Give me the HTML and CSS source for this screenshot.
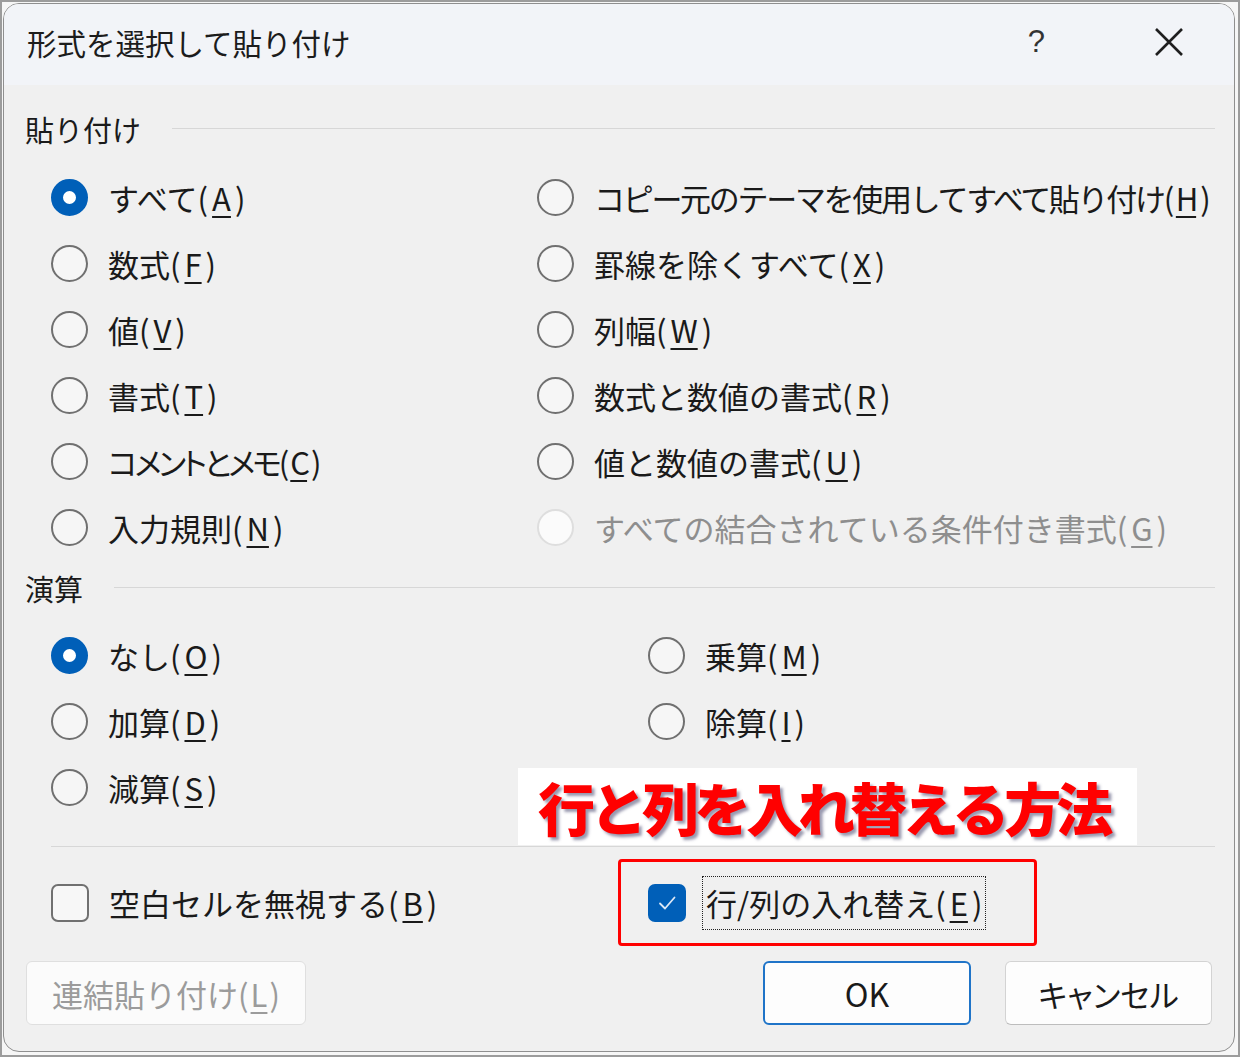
FILE: index.html
```html
<!DOCTYPE html>
<html lang="ja">
<head>
    <meta charset="UTF-8">
    <title>形式を選択して貼り付け</title>
    <link rel="stylesheet" href="styles.css">
</head>
<body>
<div class="frame">
    <div class="dialog">
        <div class="titlebar">
            <span class="title">形式を選択して貼り付け</span>
            <span class="help">?</span>
            <svg class="close" width="30" height="30" viewBox="0 0 30 30">
                <path d="M2 2L28 28M28 2L2 28" stroke="#1f1f1f" stroke-width="2.6" fill="none"/>
            </svg>
        </div>

        <div class="content">
            <div class="group-head"><span>貼り付け</span><span class="rule"></span></div>
            <div class="options paste">
                <div class="opt"><span class="radio checked"></span><span>すべて(<u>A</u>)</span></div>
                <div class="opt"><span class="radio"></span><span class="tight">コピー元のテーマを使用してすべて貼り付け(<u>H</u>)</span></div>
                <div class="opt"><span class="radio"></span><span>数式(<u>F</u>)</span></div>
                <div class="opt"><span class="radio"></span><span>罫線を除くすべて(<u>X</u>)</span></div>
                <div class="opt"><span class="radio"></span><span>値(<u>V</u>)</span></div>
                <div class="opt"><span class="radio"></span><span>列幅(<u>W</u>)</span></div>
                <div class="opt"><span class="radio"></span><span>書式(<u>T</u>)</span></div>
                <div class="opt"><span class="radio"></span><span>数式と数値の書式(<u>R</u>)</span></div>
                <div class="opt"><span class="radio"></span><span class="kata">コメントとメモ(<u>C</u>)</span></div>
                <div class="opt"><span class="radio"></span><span>値と数値の書式(<u>U</u>)</span></div>
                <div class="opt"><span class="radio"></span><span>入力規則(<u>N</u>)</span></div>
                <div class="opt disabled"><span class="radio"></span><span>すべての結合されている条件付き書式(<u>G</u>)</span></div>
            </div>

            <div class="group-head second"><span>演算</span><span class="rule"></span></div>
            <div class="options ops">
                <div class="opt"><span class="radio checked"></span><span>なし(<u>O</u>)</span></div>
                <div class="opt"><span class="radio"></span><span>乗算(<u>M</u>)</span></div>
                <div class="opt"><span class="radio"></span><span>加算(<u>D</u>)</span></div>
                <div class="opt"><span class="radio"></span><span>除算(<u>I</u>)</span></div>
                <div class="opt"><span class="radio"></span><span>減算(<u>S</u>)</span></div>
            </div>

            <div class="divider"></div>

            <div class="checks">
                <div class="opt skip"><span class="checkbox"></span><span>空白セルを無視する(<u>B</u>)</span></div>
                <div class="highlight">
                    <span class="checkbox checked">
                        <svg width="38" height="38" viewBox="0 0 38 38">
                            <path d="M12 19.5L17 24.5L26.5 13.5" stroke="#dce8f6" stroke-width="1.8" fill="none" stroke-linecap="round" stroke-linejoin="round"/>
                        </svg>
                    </span>
                    <span class="focus">行/列の入れ替え(<u>E</u>)</span>
                </div>
            </div>

            <div class="buttons">
                <button class="btn link" disabled>連結貼り付け(<u>L</u>)</button>
                <button class="btn ok">OK</button>
                <button class="btn cancel">キャンセル</button>
            </div>
        </div>

        <div class="note">行と列を入れ替える方法</div>
    </div>
</div>
</body>
</html>
```

FILE: styles.css
```css
body {
    margin: 0;
    background: #fff;
    font-family: "Noto Sans CJK JP", "Noto Sans", sans-serif;
    color: #1a1a1a;
}

.frame {
    width: 1240px;
    height: 1057px;
    box-sizing: border-box;
    border: 2px solid #9c9c9c;
    padding: 1px 3px 3px 1px;
    background: #f6f6f6;
}

.dialog {
    position: relative;
    width: 1232px;
    height: 1049px;
    box-sizing: border-box;
    border: 1px solid #8f8f8f;
    border-radius: 16px;
    overflow: hidden;
    background: #f0f0f0;
}

.titlebar {
    display: flex;
    align-items: center;
    height: 81px;
    box-sizing: border-box;
    padding: 0 50px 5px 23px;
    background: #f2f4f8;
}

.title {
    flex: 1;
    font-size: 29.5px;
    color: #1c1c1c;
}

.help {
    font-family: "Liberation Sans", sans-serif;
    font-size: 31px;
    color: #333;
    margin-right: 109px;
}

.close {
    display: block;
}

.content {
    padding: 0 19px 0 21px;
}

.group-head {
    display: flex;
    align-items: center;
    gap: 31px;
    height: 40px;
    margin-top: 24px;
    font-size: 29px;
}

.group-head.second {
    margin-top: 8px;
}

.rule {
    flex: 1;
    height: 1px;
    background: #d7d7d7;
    margin-top: -2px;
}

.options {
    display: grid;
    grid-auto-rows: 66px;
    padding-left: 26px;
}

.paste {
    margin-top: 15px;
    grid-template-columns: 486px 1fr;
}

.ops {
    margin-top: 14px;
    grid-template-columns: 597px 1fr;
}

.opt {
    display: flex;
    align-items: center;
    gap: 20px;
    font-size: 31px;
    white-space: nowrap;
}

.tight {
    letter-spacing: -2.3px;
}

.kata {
    font-feature-settings: "palt";
    letter-spacing: -3px;
}

u {
    margin: 0 4px;
    text-decoration-thickness: 2px;
    text-underline-offset: 5px;
}

.opt.disabled {
    color: #8e8e8e;
}

.radio {
    flex: none;
    width: 37px;
    height: 37px;
    box-sizing: border-box;
    border-radius: 50%;
    border: 2px solid #707070;
    background: #f6f6f6;
}

.radio.checked {
    border: 12px solid #005fb8;
    background: #fff;
}

.disabled .radio {
    border-color: #dedede;
    background: #fbfbfb;
}

.divider {
    height: 1px;
    margin: 26px 0 0 26px;
    background: #d7d7d7;
}

.checks {
    display: flex;
    align-items: center;
    height: 87px;
    margin-top: 12px;
    padding-left: 26px;
}

.skip {
    width: 567px;
}

.checkbox {
    flex: none;
    width: 38px;
    height: 38px;
    box-sizing: border-box;
    border: 2px solid #707070;
    border-radius: 7px;
    background: #f7f7f7;
}

.checkbox.checked {
    border: none;
    background: #005fb8;
}

.checkbox svg {
    display: block;
}

.highlight {
    display: flex;
    align-items: center;
    width: 419px;
    height: 87px;
    box-sizing: border-box;
    padding-left: 27px;
    border: 3px solid #ff0000;
    border-radius: 4px;
}

.focus {
    display: flex;
    align-items: center;
    height: 54px;
    box-sizing: border-box;
    margin-left: 16px;
    padding: 0 3px;
    border: 1px dotted #222;
    font-size: 31px;
    white-space: nowrap;
}

.buttons {
    display: flex;
    height: 64px;
    margin-top: 15px;
    padding-left: 1px;
}

.btn {
    height: 64px;
    box-sizing: border-box;
    font-family: inherit;
    font-size: 31px;
    color: #1a1a1a;
    background: #fdfdfd;
    border: 1px solid #d3d3d3;
    border-bottom-color: #bdbdbd;
    border-radius: 6px;
    padding: 0;
}

.btn u {
    margin: 0 2px;
}

.btn.link {
    width: 280px;
    color: #9b9b9b;
    background: #fbfbfb;
    border-color: #dfdfdf;
}

.btn.ok {
    width: 208px;
    margin-left: 457px;
    border: 2px solid #1f74c8;
    font-size: 32px;
}

.btn.cancel {
    width: 207px;
    margin-left: 34px;
    font-feature-settings: "palt";
}

.note {
    position: absolute;
    left: 514px;
    top: 764px;
    width: 619px;
    height: 77px;
    box-sizing: border-box;
    padding-left: 20px;
    background: #fff;
    font-size: 57px;
    font-weight: 900;
    line-height: 77px;
    letter-spacing: -5px;
    color: #ff0000;
    white-space: nowrap;
    text-shadow: 3px 3px 3px rgba(70, 70, 110, 0.55);
}
```
